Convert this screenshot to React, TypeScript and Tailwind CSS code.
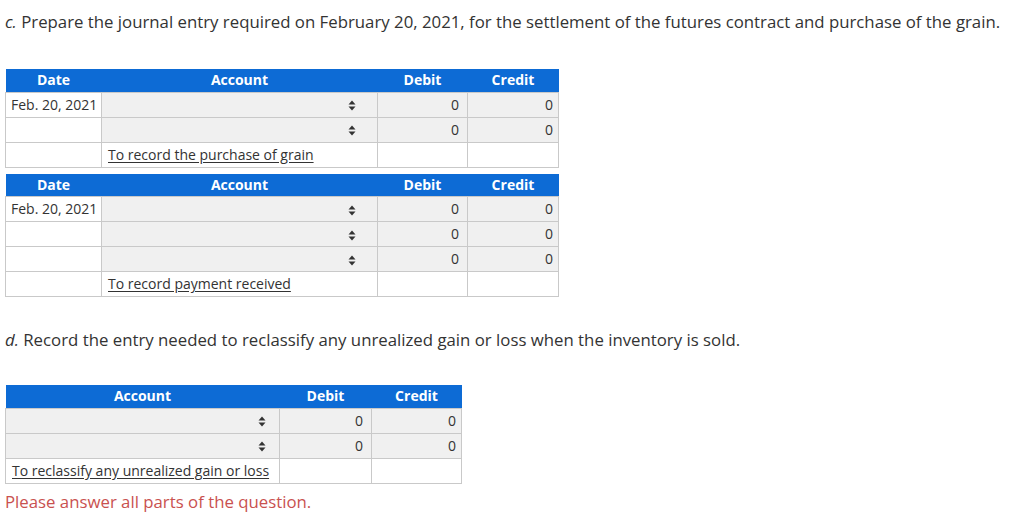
const SortIcon = () => (
  <svg width="8" height="11" viewBox="0 0 8 11" className="inline-block">
    <path d="M4 0.5 L7.5 4.5 H0.5 Z" fill="#333" />
    <path d="M4 10.5 L7.5 6.5 H0.5 Z" fill="#333" />
  </svg>
);

type Row = { date?: string; zero: boolean; note?: string };

function Journal({ rows, showDate }: { rows: Row[]; showDate: boolean }) {
  const cell = "border border-[#c9c9c9] h-[25px] p-0";
  return (
    <table className={`border-collapse table-fixed text-[14px] leading-[20px] text-[#333] ${showDate ? "w-[553px]" : "w-[456px]"}`}>
      <colgroup>
        {showDate && <col className="w-[96px]" />}
        <col className={showDate ? "w-[276px]" : "w-[274px]"} />
        <col className={showDate ? "w-[90px]" : "w-[92px]"} />
        <col className={showDate ? "w-[91px]" : "w-[90px]"} />
      </colgroup>
      <thead>
        <tr className="bg-[#0d6bd5] text-white font-bold h-[23px]">
          {showDate && <th className="p-0 font-bold">Date</th>}
          <th className="p-0 font-bold">Account</th>
          <th className="p-0 font-bold">Debit</th>
          <th className="p-0 font-bold">Credit</th>
        </tr>
      </thead>
      <tbody>
        {rows.map((r, i) =>
          r.note ? (
            <tr key={i}>
              {showDate && <td className={cell}></td>}
              <td className={`${cell} px-[6px] whitespace-nowrap`}>
                <span className="underline underline-offset-2">{r.note}</span>
              </td>
              <td className={cell}></td>
              <td className={cell}></td>
            </tr>
          ) : (
            <tr key={i}>
              {showDate && <td className={`${cell} px-[5px] whitespace-nowrap`}>{r.date}</td>}
              <td className={`${cell} bg-[#f0f0f0]`}>
                <div className={`flex justify-end ${showDate ? "pr-[21px]" : "pr-[13px]"} pt-[2px]`}>
                  <SortIcon />
                </div>
              </td>
              <td className={`${cell} bg-[#f0f0f0] text-right pr-[8px]`}>0</td>
              <td className={`${cell} bg-[#f0f0f0] text-right pr-[5px]`}>0</td>
            </tr>
          )
        )}
      </tbody>
    </table>
  );
}

export default function App() {
  return (
    <div className="w-[1027px] h-[532px] bg-white pl-[5px] pt-[10px] text-[#333]" style={{ fontFamily: '"Open Sans", sans-serif' }}>
      <p className="text-[16.8px] leading-[24px]">
        <i>c.</i> Prepare the journal entry required on February 20, 2021, for the settlement of the futures contract and purchase of the grain.
      </p>

      <div className="mt-[35px]">
        <Journal
          showDate
          rows={[
            { date: "Feb. 20, 2021", zero: true },
            { zero: true },
            { zero: false, note: "To record the purchase of grain" },
          ]}
        />
      </div>

      <div className="mt-[6px]">
        <Journal
          showDate
          rows={[
            { date: "Feb. 20, 2021", zero: true },
            { zero: true },
            { zero: true },
            { zero: false, note: "To record payment received" },
          ]}
        />
      </div>

      <p className="text-[16.8px] leading-[24px] mt-[31px]">
        <i>d.</i> Record the entry needed to reclassify any unrealized gain or loss when the inventory is sold.
      </p>

      <div className="mt-[33px]">
        <Journal
          showDate={false}
          rows={[
            { zero: true },
            { zero: true },
            { zero: false, note: "To reclassify any unrealized gain or loss" },
          ]}
        />
      </div>

      <p className="text-[16.8px] leading-[24px] mt-[6px] text-[#c9514f]">Please answer all parts of the question.</p>
    </div>
  );
}
